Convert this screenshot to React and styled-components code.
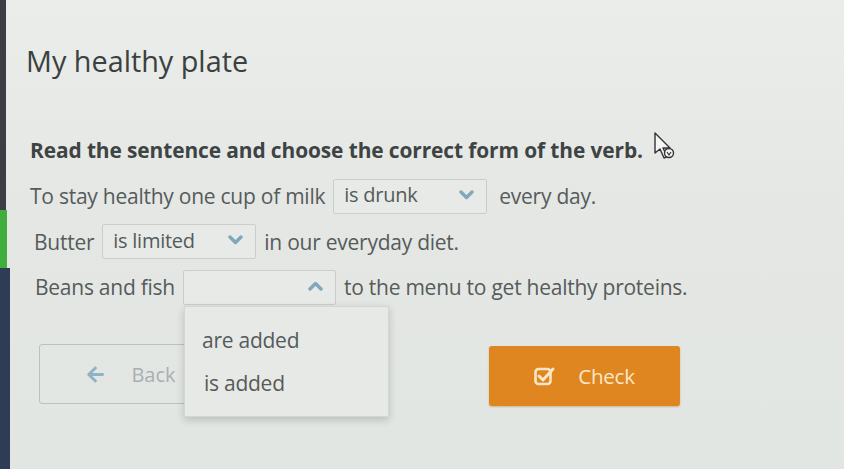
import React from "react";
import styled, { createGlobalStyle } from "styled-components";
import { FaArrowLeft } from "react-icons/fa";

const Global = createGlobalStyle`
  html, body { margin: 0; padding: 0; }
  body {
    width: 844px; height: 469px; overflow: hidden;
    background: #e4e7e4;
    font-family: "Open Sans", "Noto Sans", sans-serif;
  }
`;

const Page = styled.div`
  display: flex;
  width: 844px;
  height: 469px;
  background: linear-gradient(180deg, #eaedea 0%, #e4e7e4 45%, #e2e6e3 100%);
  position: relative;
`;

const Sidebar = styled.div`
  display: flex;
  flex-direction: column;
  width: 8px;
  flex: none;
`;

const Strip = styled.div`
  height: ${(p) => p.h}px;
  flex: ${(p) => (p.grow ? 1 : "none")};
  background: ${(p) => p.color};
  width: ${(p) => p.w}px;
`;

const Main = styled.div`
  flex: 1;
  padding: 42px 0 0 18px;
  display: flex;
  flex-direction: column;
`;

const Title = styled.h1`
  margin: 0;
  font-weight: 400;
  font-size: 28.8px;
  line-height: 38px;
  color: #3b4040;
`;

const Content = styled.div`
  padding-left: 4px;
  margin-top: 52px;
  display: flex;
  flex-direction: column;
`;

const Instruction = styled.p`
  margin: 0 0 10.5px;
  font-weight: 700;
  font-size: 20.9px;
  line-height: 36px;
  color: #3e4343;
  letter-spacing: -0.1px;
`;

const Sentence = styled.div`
  display: flex;
  align-items: center;
  gap: 8px;
  height: 35px;
  margin-bottom: 10.5px;
  padding-left: ${(p) => p.indent || 0}px;
  font-size: 21px;
  color: #565b5b;
  letter-spacing: -0.25px;
  position: relative;
`;

const Words = styled.span`
  white-space: nowrap;
  margin-left: ${(p) => p.ml || 0}px;
`;

const SelectBox = styled.div`
  position: relative;
  box-sizing: border-box;
  width: ${(p) => p.w || 154}px;
  height: 35px;
  border: 1px solid #c9cecc;
  border-radius: 2px;
  background: #e7eae7;
  display: flex;
  align-items: center;
  justify-content: space-between;
  padding: 0 12px 3px 10px;
  color: #555a5a;
  font-size: 20px;
`;

const Chevron = styled.svg`
  width: 15px;
  height: 10px;
  flex: none;
  margin-left: auto;
`;

const Menu = styled.div`
  position: absolute;
  left: 0;
  top: 35px;
  width: 205px;
  height: 111px;
  box-sizing: border-box;
  background: #e6e9e6;
  border: 1px solid #d3d7d4;
  box-shadow: 0 3px 8px rgba(0, 0, 0, 0.18);
  padding-top: 12px;
  z-index: 5;
`;

const Option = styled.div`
  height: 43px;
  line-height: 43px;
  padding-left: ${(p) => p.pl || 17}px;
  font-size: 21px;
  color: #565b5b;
`;

const Buttons = styled.div`
  display: flex;
  align-items: flex-start;
  margin-top: 29px;
  padding-left: 9px;
`;

const BackButton = styled.div`
  box-sizing: border-box;
  width: 184px;
  height: 60px;
  border: 1px solid #bcc1bf;
  border-radius: 3px;
  display: flex;
  align-items: center;
  justify-content: center;
  gap: 26px;
  color: #a9b0b2;
  font-size: 20px;
`;

const CheckButton = styled.div`
  box-sizing: border-box;
  width: 191px;
  height: 60px;
  margin-left: 266px;
  margin-top: 2px;
  border-radius: 3px;
  background: #df8620;
  box-shadow: 0 1px 2px rgba(160, 90, 10, 0.35);
  display: flex;
  align-items: center;
  justify-content: center;
  gap: 22px;
  color: #fbe6c8;
  font-size: 20.6px;
  letter-spacing: -0.3px;
`;

const Cursor = styled.svg`
  position: absolute;
  left: 652px;
  top: 131px;
  width: 24px;
  height: 30px;
  z-index: 6;
`;

const Down = () => (
  <Chevron viewBox="0 0 15 10">
    <path d="M2 2 L7.5 7.5 L13 2" fill="none" stroke="#7fa8ba" strokeWidth="3.4" strokeLinecap="round" strokeLinejoin="round" />
  </Chevron>
);

const Up = () => (
  <Chevron viewBox="0 0 15 10">
    <path d="M2 8 L7.5 2.5 L13 8" fill="none" stroke="#7fa8ba" strokeWidth="3.4" strokeLinecap="round" strokeLinejoin="round" />
  </Chevron>
);

const CheckIcon = () => (
  <svg width="22" height="20" viewBox="0 0 22 20">
    <rect x="1.5" y="3" width="15" height="15" rx="3" fill="none" stroke="#fbe6c8" strokeWidth="2.6" />
    <path d="M5 10 L9 14 L19 3" fill="none" stroke="#fbe6c8" strokeWidth="3" strokeLinecap="round" strokeLinejoin="round" />
  </svg>
);

export default function App() {
  return (
    <>
      <Global />
      <Page>
        <Sidebar>
          <Strip color="#3b3e42" h={210} w={6} />
          <Strip color="#3fae3c" h={58} w={7} />
          <Strip color="#2e3c55" grow w={10} />
        </Sidebar>
        <Main>
          <Title>My healthy plate</Title>
          <Content>
            <Instruction>Read the sentence and choose the correct form of the verb.</Instruction>
            <Sentence>
              <Words>To stay healthy one cup of milk</Words>
              <SelectBox>
                <span>is drunk</span>
                <Down />
              </SelectBox>
              <Words ml={4}>every day.</Words>
            </Sentence>
            <Sentence indent={4}>
              <Words>Butter</Words>
              <SelectBox>
                <span>is limited</span>
                <Down />
              </SelectBox>
              <Words>in our everyday diet.</Words>
            </Sentence>
            <Sentence indent={5}>
              <Words>Beans and fish</Words>
              <SelectBox w={153}>
                <Up />
                <Menu>
                  <Option>are added</Option>
                  <Option pl={19}>is added</Option>
                </Menu>
              </SelectBox>
              <Words>to the menu to get healthy proteins.</Words>
            </Sentence>
            <Buttons>
              <BackButton>
                <FaArrowLeft size={19} color="#8fb2c6" />
                <span>Back</span>
              </BackButton>
              <CheckButton>
                <CheckIcon />
                <span>Check</span>
              </CheckButton>
            </Buttons>
          </Content>
        </Main>
        <Cursor viewBox="0 0 24 30">
          <path d="M3 2 L3 22 L8 18 L12 27 L15 25.5 L11 17 L18 17 Z" fill="#f4f5f4" stroke="#333" strokeWidth="1.4" strokeLinejoin="round" />
          <circle cx="17" cy="22" r="4.5" fill="#f4f5f4" stroke="#333" strokeWidth="1.4" />
          <path d="M15 21 L17 24 L19 21" fill="none" stroke="#333" strokeWidth="1.2" />
        </Cursor>
      </Page>
    </>
  );
}
